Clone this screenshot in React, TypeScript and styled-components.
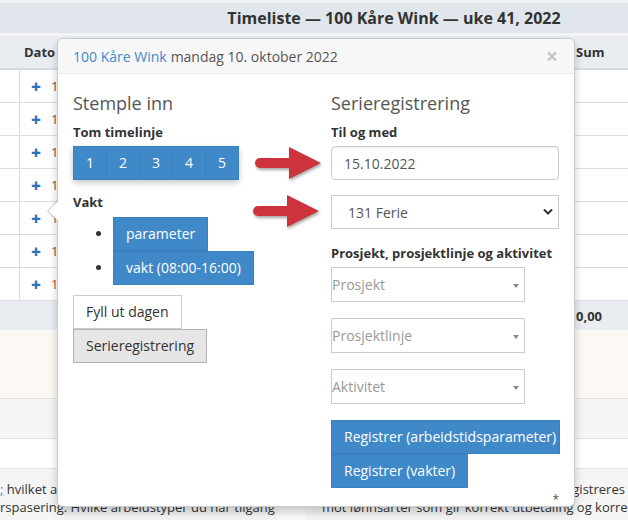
import React from "react";
import styled, { createGlobalStyle } from "styled-components";

const Global = createGlobalStyle`
  html, body { margin: 0; padding: 0; background: #fff; }
  body {
    font-family: "Open Sans", "Liberation Sans", sans-serif;
    font-size: 14px;
    color: #333;
  }
  * { box-sizing: border-box; }
`;

const Page = styled.div`
  position: relative;
  width: 628px;
  height: 520px;
  overflow: hidden;
  background: #fff;
  display: flex;
  flex-direction: column;
`;

const Band = styled.div<{ $h: number; $bg: string; $line?: string }>`
  flex: none;
  height: ${(p) => p.$h}px;
  background: ${(p) => p.$bg};
  border-bottom: ${(p) => (p.$line ? `1px solid ${p.$line}` : "none")};
`;

const TitleBar = styled.div`
  flex: none;
  height: 30px;
  background: #e1e6ec;
  display: flex;
  align-items: center;
  justify-content: center;
  padding-left: 160px;
  font-size: 16px;
  font-weight: 700;
  color: #333;
`;

const HeadRow = styled.div<{ $h: number; $line?: boolean }>`
  flex: none;
  height: ${(p) => p.$h}px;
  background: #e9edf2;
  border-bottom: ${(p) => (p.$line ? "2px solid #d4dae1" : "none")};
  display: grid;
  grid-template-columns: 1fr 55px;
  align-items: center;
  font-size: 13px;
  font-weight: 700;
`;

const HeadCell = styled.div<{ $pad: number }>`
  padding-left: ${(p) => p.$pad}px;
`;

const Row = styled.div`
  flex: none;
  height: 33px;
  border-bottom: 1px solid #dcdcdc;
  display: grid;
  grid-template-columns: 20px 1fr 55px;
`;

const Cell = styled.div`
  border-right: 1px solid #dcdcdc;
  display: flex;
  align-items: center;
  &:last-child { border-right: none; }
`;

const Plus = styled.span`
  color: #2f73bd;
  font-weight: 800;
  font-size: 17px;
  margin-left: 11px;
  width: 20px;
`;

const DayText = styled.span<{ $c: string }>`
  color: ${(p) => p.$c};
  font-size: 13px;
`;

const Notes = styled.div`
  flex: 1;
  display: grid;
  grid-template-columns: 277px 28px 1fr;
  background: #f5f5f5;
`;

const NotePanel = styled.div<{ $pad: number }>`
  padding: 11px 0 0 ${(p) => p.$pad}px;
  font-size: 13px;
  line-height: 18px;
  color: #333;
  white-space: nowrap;
  overflow: hidden;
`;

const NoteGap = styled.div`
  background: #fafafa;
`;

const NoteLink = styled.span`
  color: #428bca;
  text-decoration: underline;
`;

/* ---------- popover ---------- */

const Popover = styled.div`
  position: absolute;
  left: 57px;
  top: 38px;
  width: 518px;
  height: 469px;
  background: #fff;
  border: 1px solid rgba(0, 0, 0, 0.2);
  border-radius: 6px;
  box-shadow: 0 5px 10px rgba(0, 0, 0, 0.2);
  display: flex;
  flex-direction: column;
`;

const PopArrow = styled.div`
  position: absolute;
  left: -11px;
  top: 161px;
  width: 0;
  height: 0;
  border-style: solid;
  border-width: 11px 11px 11px 0;
  border-color: transparent rgba(0, 0, 0, 0.25) transparent transparent;
  &::after {
    content: "";
    position: absolute;
    left: 1px;
    top: -10px;
    border-style: solid;
    border-width: 10px 10px 10px 0;
    border-color: transparent #fff transparent transparent;
  }
`;

const PopHeader = styled.div`
  flex: none;
  height: 35px;
  background: #f7f7f7;
  border-bottom: 1px solid #ebebeb;
  border-radius: 5px 5px 0 0;
  padding: 0 15px;
  display: flex;
  align-items: center;
  font-size: 14px;
  color: #555;
`;

const HeaderLink = styled.span`
  color: #428bca;
  margin-right: 4px;
`;

const Close = styled.span`
  margin-left: auto;
  font-size: 21px;
  font-weight: 700;
  color: #000;
  opacity: 0.2;
  line-height: 1;
  margin-right: 1px;
`;

const PopBody = styled.div`
  flex: 1;
  display: grid;
  grid-template-columns: minmax(0, 1fr) minmax(0, 1fr);
  padding: 9px 0 0;
`;

const Col = styled.div`
  padding: 0 15px;
  display: flex;
  flex-direction: column;
  align-items: flex-start;
  min-width: 0;
`;

const H4 = styled.h4`
  margin: 10px 0 10px;
  font-size: 18px;
  font-weight: 400;
  line-height: 20px;
  color: #555;
`;

const Label = styled.div<{ $mt?: number }>`
  margin-top: ${(p) => p.$mt ?? 0}px;
  margin-bottom: 5px;
  font-size: 13px;
  font-weight: 700;
  line-height: 18px;
  color: #333;
`;

const BtnGroup = styled.div`
  display: flex;
  box-shadow: 0 3px 6px rgba(0, 0, 0, 0.22);
`;

const Btn = styled.button<{ $kind: "primary" | "default" | "active" }>`
  font-family: inherit;
  font-size: 14px;
  line-height: 20px;
  padding: 6px 12px;
  max-width: 229px;
  overflow: visible;
  text-align: left;
  border-radius: 0;
  border: 1px solid
    ${(p) => (p.$kind === "primary" ? "#3a80bf" : p.$kind === "active" ? "#b4b4b4" : "#cccccc")};
  background: ${(p) => (p.$kind === "primary" ? "#3f89c9" : p.$kind === "active" ? "#e6e6e6" : "#fff")};
  color: ${(p) => (p.$kind === "primary" ? "#fff" : "#333")};
  cursor: pointer;
  white-space: nowrap;
`;

const GroupBtn = styled(Btn)`
  width: 34px;
  padding: 6px 0;
  text-align: center;
  & + & { margin-left: -1px; }
`;

const List = styled.ul`
  margin: 1px 0 10px;
  padding-left: 40px;
  li { height: 34px; }
`;

const Stack = styled.div`
  display: flex;
  flex-direction: column;
  align-items: flex-start;
`;

const TextInput = styled.input`
  width: 228px;
  height: 34px;
  padding: 6px 12px;
  font-family: inherit;
  font-size: 14px;
  color: #555;
  border: 1px solid #ccc;
  border-radius: 4px;
  box-shadow: inset 0 1px 1px rgba(0, 0, 0, 0.075);
`;

const SelectWrap = styled.div`
  position: relative;
  margin-top: 15px;
  width: 228px;
`;

const Select = styled.select`
  appearance: none;
  width: 228px;
  height: 34px;
  padding: 6px 12px 6px 16px;
  font-family: inherit;
  font-size: 14px;
  color: #555;
  background: #fff;
  border: 1px solid #ccc;
  border-radius: 0;
`;

const Chevron = styled.svg`
  position: absolute;
  right: 6px;
  top: 13px;
  pointer-events: none;
`;

const Select2 = styled.div`
  position: relative;
  width: 194px;
  height: 35px;
  margin-bottom: 16px;
  border: 1px solid #ccc;
  display: flex;
  align-items: center;
  padding-left: 0;
  font-size: 14px;
  color: #999;
`;

const Caret = styled.span`
  position: absolute;
  right: 5px;
  top: 16px;
  border-style: solid;
  border-width: 4px 3px 0;
  border-color: #888 transparent transparent;
`;

const Star = styled.div`
  align-self: flex-end;
  margin-top: 3px;
  font-size: 12px;
  color: #555;
`;

const Annot = styled.svg<{ $left: number; $top: number }>`
  position: absolute;
  left: ${(p) => p.$left}px;
  top: ${(p) => p.$top}px;
  filter: drop-shadow(1px 2px 1.5px rgba(0, 0, 0, 0.35));
  overflow: visible;
`;

const RedArrow = ({ left, top }: { left: number; top: number }) => (
  <Annot $left={left} $top={top} width={72} height={36} viewBox="0 0 72 36">
    <rect x={3} y={13} width={38} height={10} rx={5} fill="#cc333a" />
    <polygon points="37,2 69,18 37,34" fill="#cc333a" />
  </Annot>
);

const days = ["#6b5a3a", "#6b5a3a", "#6b5a3a", "#6b5a3a", "#6b5a3a", "#6b5a3a", "#d9412b"];

export default function App() {
  return (
    <>
      <Global />
      <Page>
        <Band $h={3} $bg="#eef0f3" />
        <TitleBar>Timeliste — 100 Kåre Wink — uke 41, 2022</TitleBar>
        <Band $h={3} $bg="#f3f5f7" />
        <HeadRow $h={34} $line>
          <HeadCell $pad={24}>Dato</HeadCell>
          <HeadCell $pad={3}>Sum</HeadCell>
        </HeadRow>
        {days.map((c, i) => (
          <Row key={i}>
            <Cell />
            <Cell>
              <Plus>+</Plus>
              <DayText $c={c}>1{i}.10.2022</DayText>
            </Cell>
            <Cell />
          </Row>
        ))}
        <HeadRow $h={29}>
          <HeadCell $pad={24} />
          <HeadCell $pad={3}>0,00</HeadCell>
        </HeadRow>
        <Band $h={69} $bg="#fcf9f4" $line="#e3e3e3" />
        <Band $h={40} $bg="#f5f5f5" $line="#e3e3e3" />
        <Band $h={30} $bg="#ffffff" $line="#e3e3e3" />
        <Notes>
          <NotePanel $pad={0}>
            <div>
              <NoteLink>;</NoteLink> hvilket arbeidstype som skal brukes for
            </div>
            <div>rspasering. Hvilke arbeidstyper du har tilgang</div>
          </NotePanel>
          <NoteGap />
          <NotePanel $pad={17}>
            <div>Fravær, overtid, tilleggstimer som også registreres riktig</div>
            <div>mot lønnsarter som gir korrekt utbetaling og korrekt rapportering</div>
          </NotePanel>
        </Notes>

        <Popover>
          <PopArrow />
          <PopHeader>
            <HeaderLink>100 Kåre Wink</HeaderLink> mandag 10. oktober 2022
            <Close>×</Close>
          </PopHeader>
          <PopBody>
            <Col>
              <H4>Stemple inn</H4>
              <Label>Tom timelinje</Label>
              <BtnGroup>
                {[1, 2, 3, 4, 5].map((n) => (
                  <GroupBtn key={n} $kind="primary">
                    {n}
                  </GroupBtn>
                ))}
              </BtnGroup>
              <Label $mt={13}>Vakt</Label>
              <List>
                <li>
                  <Btn $kind="primary">parameter</Btn>
                </li>
                <li>
                  <Btn $kind="primary">vakt (08:00-16:00)</Btn>
                </li>
              </List>
              <Stack>
                <Btn $kind="default">Fyll ut dagen</Btn>
                <Btn $kind="active">Serieregistrering</Btn>
              </Stack>
            </Col>
            <Col>
              <H4>Serieregistrering</H4>
              <Label>Til og med</Label>
              <TextInput defaultValue="15.10.2022" />
              <SelectWrap>
                <Select defaultValue="131">
                  <option value="131">131 Ferie</option>
                </Select>
                <Chevron width={10} height={7} viewBox="0 0 10 7">
                  <path d="M1 1.5 L5 5.5 L9 1.5" fill="none" stroke="#333" strokeWidth={2} />
                </Chevron>
              </SelectWrap>
              <Label $mt={15}>Prosjekt, prosjektlinje og aktivitet</Label>
              <Select2>
                Prosjekt
                <Caret />
              </Select2>
              <Select2>
                Prosjektlinje
                <Caret />
              </Select2>
              <Select2>
                Aktivitet
                <Caret />
              </Select2>
              <Stack>
                <Btn $kind="primary">Registrer (arbeidstidsparameter)</Btn>
                <Btn $kind="primary">Registrer (vakter)</Btn>
              </Stack>
              <Star>*</Star>
            </Col>
          </PopBody>
        </Popover>

        <RedArrow left={252} top={145} />
        <RedArrow left={250} top={193} />
      </Page>
    </>
  );
}
